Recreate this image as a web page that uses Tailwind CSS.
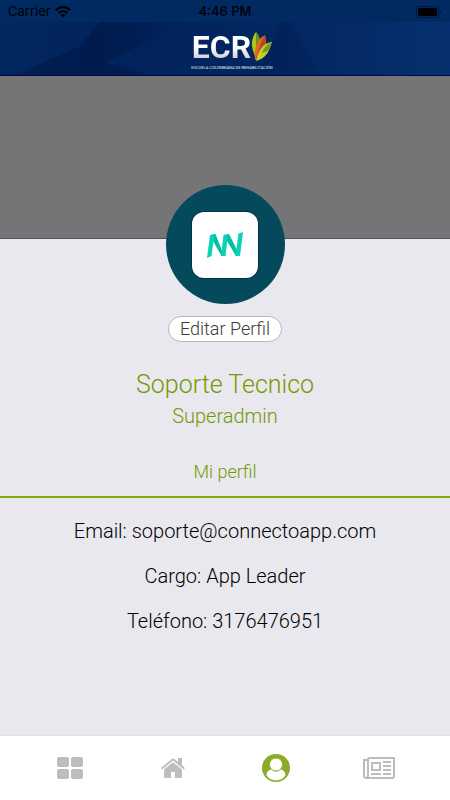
<!DOCTYPE html>
<html lang="es">
<head>
<meta charset="utf-8">
<meta name="viewport" content="width=device-width, initial-scale=1">
<title>Mi perfil</title>
<script src="https://cdn.jsdelivr.net/npm/@tailwindcss/browser@4"></script>
</head>
<body class="flex min-h-screen flex-col bg-[#e9e8ef] font-['Roboto',sans-serif] text-black">
  <header class="relative isolate overflow-hidden border-b border-[#000b45] bg-[#052b68]">
    <svg class="absolute inset-0 -z-10 h-full w-full" viewBox="0 0 450 75" preserveAspectRatio="none" aria-hidden="true">
      <defs>
        <linearGradient id="sky" x1="0" x2="1" y1="0" y2="0"><stop offset="0" stop-color="#02265e"/><stop offset=".3" stop-color="#01235c"/><stop offset=".6" stop-color="#022661"/><stop offset="1" stop-color="#06306f"/></linearGradient>
        <linearGradient id="fold" x1="0" x2="1" y1="0" y2="0"><stop offset="0" stop-color="#001a4d" stop-opacity=".5"/><stop offset=".45" stop-color="#001a4d"/><stop offset="1" stop-color="#001a4d" stop-opacity="0"/></linearGradient>
      </defs>
      <rect width="450" height="75" fill="url(#sky)"/>
      <path d="M100 22H190L105 62L150 75H15L80 46Z" fill="url(#fold)"/>
      <path d="M280 22H291L319 75H258Z" fill="#001d55" opacity=".4"/>
      <rect width="450" height="22" fill="#012a62"/>
    </svg>
    <div class="grid h-[22px] grid-cols-3 items-center px-2 pt-0.5 font-['Inter',sans-serif] text-[13px] text-black">
      <div class="flex items-center gap-1">
        <span>Carrier</span>
        <svg class="h-3 w-4" viewBox="0 0 16 12" fill="none" stroke="#000" stroke-width="2.2" aria-hidden="true"><path d="M.8 4.3C5-.1 11-.1 15.200 4.300M3.500 7.100C6.100 4.600 9.900 4.600 12.500 7.100"/><path d="M5.600 9.100Q8 7.100 10.400 9.100L8 11.600Z" fill="#000" stroke="none"/></svg>
      </div>
      <span class="text-center font-medium">4:46 PM</span>
      <svg class="h-3 w-[26px] justify-self-end" viewBox="0 0 26 12" aria-hidden="true"><rect x=".5" y=".5" width="22" height="11" rx="3" fill="none" stroke="#001538"/><rect x="2" y="2" width="19" height="8" rx="1.500"/><path d="M24 4Q26 6 24 8Z" fill="#001538"/></svg>
    </div>
    <div class="flex h-[53px] justify-center pt-2 pl-[14px]">
      <div class="flex flex-col items-center">
        <div class="flex h-[34px] items-center">
          <span class="bg-gradient-to-b from-white from-50% to-[#bcbcc4] bg-clip-text text-[32px] leading-[34px] font-bold text-transparent">ECR</span>
          <svg class="h-8 w-[21px] shrink-0" viewBox="0 0 21 32" aria-hidden="true"><path d="M5 1C10 6 11 15 5 27C0 17-1 9 5 1Z" fill="#a8c61c"/><path d="M5 1C11 7 9 17 5 23Z" fill="#668f20"/><path d="M14 4C5 9 3 18 4 29C13 24 17 15 14 4Z" fill="#e26a27"/><path d="M14 4C8 14 9 18 4 29C14 23 16 14 14 4Z" fill="#b64322"/><path d="M21 11C13 12 8 17 5 30C16 27 18 20 21 11Z" fill="#c5cf27"/><path d="M21 11C14 14 12 19 11 22L17 20Z" fill="#6f9b24"/></svg>
        </div>
        <p class="text-[4px] leading-[7px] whitespace-nowrap text-white/90">ESCUELA COLOMBIANA DE REHABILITACIÓN</p>
      </div>
    </div>
  </header>

  <main class="flex flex-1 flex-col items-center">
    <div class="h-[163px] w-full border-b border-[#535355] bg-[#757577]"></div>
    <div class="-mt-[54px] flex size-[119px] items-center justify-center rounded-full bg-[#054a5c]">
      <div class="flex size-[66px] items-center justify-center rounded-xl bg-white shadow-[0_0_0_1px_#043347]">
        <svg class="h-[26px] w-9" viewBox="0 0 36 26" role="img" aria-label="Connecto"><g fill="#04bea8"><path d="M6 2H8.500L17 24H14.500L6 9Z"/><path d="M20 2H22L33 24H29L20 9Z"/></g><g fill="#08d3b5"><path d="M3 3L7.500 2L4.500 24L0 26Z"/><path d="M16.500 3L21 2L18.500 24H14Z"/><path d="M31.500 1.500L36 0L33 24H28.500Z"/></g></svg>
      </div>
    </div>
    <button type="button" class="mt-3 h-[26px] rounded-full border border-[#b8b8bc] bg-white px-[11px] text-[18px] leading-6 font-light text-[#3c3c3c]">Editar Perfil</button>
    <h1 class="mt-7 text-[25px] leading-[30px] font-light text-[#739b00]">Soporte Tecnico</h1>
    <p class="mt-1 text-[20px] leading-6 font-light text-[#739b00]">Superadmin</p>
    <h2 class="mt-8 pb-3 text-[18px] leading-6 font-light text-[#739b00]">Mi perfil</h2>
    <div class="flex w-full flex-col items-center gap-[21px] border-t-2 border-[#82a90c] pt-[21px] text-[20px] leading-6 font-light">
      <p>Email: soporte@connectoapp.com</p>
      <p>Cargo: App Leader</p>
      <p>Teléfono: 3176476951</p>
    </div>
  </main>

  <nav aria-label="Principal" class="grid h-[65px] grid-cols-4 border-t border-[#e2e2e5] bg-white pr-5 pl-[18px] text-[#bdbdbd]">
    <a href="#menu" aria-label="Menú" class="flex items-center justify-center"><svg class="h-[22px] w-[26px]" viewBox="0 0 26 22" fill="currentColor"><rect width="12" height="10" rx="2"/><rect x="14" width="12" height="10" rx="2"/><rect y="12" width="12" height="10" rx="2"/><rect x="14" y="12" width="12" height="10" rx="2"/></svg></a>
    <a href="#inicio" aria-label="Inicio" class="flex items-center justify-center"><svg class="h-5 w-6" viewBox="0 0 24 20" fill="currentColor"><path d="M3 11.500L12 4.300L21 11.500V18.500Q21 20 19.500 20H14V14H10V20H4.500Q3 20 3 18.500Z"/><path d="M0 10L11 .8Q12 0 13 .8L17 4V0H21V7.300L24 10L22.800 11.400L12 2.600L1.200 11.400Z"/></svg></a>
    <a href="#perfil" aria-label="Perfil" aria-current="page" class="flex items-center justify-center text-[#8aac28]"><svg class="size-7" viewBox="0 0 28 28"><circle cx="14" cy="14" r="14" fill="currentColor"/><path d="M4.500 21.500C4.500 18 7 15.500 9.500 15.500Q14 19.500 18.500 15.500C21 15.500 23.500 18 23.500 21.500C19 28 9 28 4.500 21.500Z" fill="#fff"/><circle cx="14" cy="10.500" r="6.600" fill="#fff" stroke="currentColor"/></svg></a>
    <a href="#noticias" aria-label="Noticias" class="flex items-center justify-center"><svg class="h-[22px] w-8" viewBox="0 0 32 22" fill="none" stroke="currentColor" stroke-width="2"><path d="M5 1H31V19Q31 21 29 21H3Q1 21 1 19V3H5M5 1V18Q5 21 3 21"/><rect x="9" y="6" width="8" height="7"/><path d="M20 5H28M20 9H28M20 13H28M8 17H18M20 17H28"/></svg></a>
  </nav>
</body>
</html>
